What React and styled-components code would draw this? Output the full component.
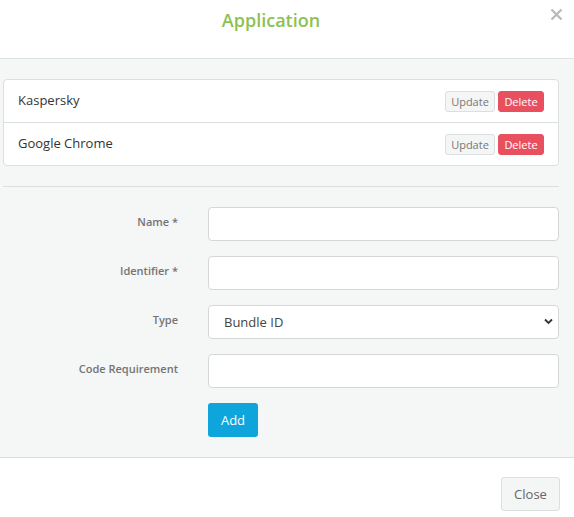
import React from "react";
import styled, { createGlobalStyle } from "styled-components";

const Global = createGlobalStyle`
  html, body { margin: 0; padding: 0; background: #fff; }
  body { font-family: "Open Sans", "Noto Sans", sans-serif; color: #333; }
  * { box-sizing: border-box; }
`;

const Modal = styled.div`
  width: 574px;
  height: 517px;
  display: flex;
  flex-direction: column;
  background: #fff;
  overflow: hidden;
`;

const Header = styled.div`
  position: relative;
  height: 59px;
  border-bottom: 1px solid #dfe3e3;
  display: flex;
  align-items: flex-start;
  justify-content: center;
  padding: 7px 32px 0 0;
`;

const Title = styled.h4`
  margin: 0;
  font-size: 18px;
  font-weight: 600;
  line-height: 26px;
  color: #8cc152;
`;

const CloseX = styled.button`
  position: absolute;
  top: 5px;
  right: 9px;
  width: 18px;
  height: 18px;
  padding: 0;
  border: none;
  background: transparent;
  display: flex;
  align-items: center;
  justify-content: center;
`;

const Body = styled.div`
  flex: 0 0 auto;
  background: #f5f6f6;
  padding: 20px 15px 20px 3px;
  border-bottom: 1px solid #dcdfdf;
`;

const List = styled.div`
  background: #fff;
  border: 1px solid #dcdfdf;
  border-radius: 4px;
`;

const Row = styled.div`
  height: 42px;
  display: flex;
  align-items: center;
  justify-content: space-between;
  padding: 0 14px 0 14px;
  & + & { border-top: 1px solid #dcdfdf; height: 43px; }
`;

const RowName = styled.span`
  font-size: 13px;
  color: #333;
  margin-top: -2px;
`;

const Actions = styled.div`
  display: flex;
  gap: 3px;
`;

const SmallBtn = styled.button`
  height: 21px;
  width: ${(p) => (p.$danger ? "46px" : "50px")};
  padding: 0;
  font-family: inherit;
  font-size: 11px;
  border-radius: 3px;
  border: 1px solid ${(p) => (p.$danger ? "#e8505f" : "#dcdfdf")};
  background: ${(p) => (p.$danger ? "#e8505f" : "#f4f5f5")};
  color: ${(p) => (p.$danger ? "#fff" : "#777")};
`;

const Rule = styled.hr`
  margin: 20px 0;
  border: none;
  border-top: 1px solid #dcdfdf;
`;

const Form = styled.div`
  display: grid;
  grid-template-columns: 175px 1fr;
  column-gap: 30px;
  row-gap: 15px;
  align-items: start;
`;

const Label = styled.label`
  text-align: right;
  font-size: 11px;
  line-height: 15px;
  padding-top: 7px;
  font-weight: 600;
  color: #747474;
`;

const Input = styled.input`
  height: 34px;
  width: 100%;
  border: 1px solid #d5d8d8;
  border-radius: 4px;
  background: #fff;
  font-family: inherit;
  font-size: 13px;
  padding: 0 15px;
`;

const SelectWrap = styled.div`
  position: relative;
  height: 34px;
`;

const Select = styled.select`
  appearance: none;
  height: 34px;
  width: 100%;
  border: 1px solid #d5d8d8;
  border-radius: 4px;
  background: #fff;
  font-family: inherit;
  font-size: 13px;
  color: #444;
  padding: 0 15px;
`;

const Chevron = styled.svg`
  position: absolute;
  right: 6px;
  top: 13px;
  pointer-events: none;
`;

const AddBtn = styled.button`
  grid-column: 2;
  justify-self: start;
  width: 50px;
  height: 34px;
  border: none;
  border-radius: 3px;
  background: #0ea5dc;
  color: #fff;
  font-family: inherit;
  font-size: 13px;
`;

const Footer = styled.div`
  flex: 1;
  display: flex;
  justify-content: flex-end;
  align-items: flex-start;
  padding: 19px 14px 0 0;
`;

const CloseBtn = styled.button`
  height: 34px;
  width: 59px;
  border: 1px solid #dcdfdf;
  border-radius: 3px;
  background: #f4f5f5;
  color: #666;
  font-family: inherit;
  font-size: 13px;
`;

const apps = ["Kaspersky", "Google Chrome"];

export default function App() {
  return (
    <>
      <Global />
      <Modal>
        <Header>
          <Title>Application</Title>
          <CloseX aria-label="close">
            <svg width="13" height="13" viewBox="0 0 13 13">
              <path d="M1.5 1.5 L11.5 11.5 M11.5 1.5 L1.5 11.5" stroke="#b8b8b8" strokeWidth="2.2" />
            </svg>
          </CloseX>
        </Header>
        <Body>
          <List>
            {apps.map((a) => (
              <Row key={a}>
                <RowName>{a}</RowName>
                <Actions>
                  <SmallBtn>Update</SmallBtn>
                  <SmallBtn $danger>Delete</SmallBtn>
                </Actions>
              </Row>
            ))}
          </List>
          <Rule />
          <Form>
            <Label>Name *</Label>
            <Input />
            <Label>Identifier *</Label>
            <Input />
            <Label>Type</Label>
            <SelectWrap>
              <Select defaultValue="bundle">
                <option value="bundle">Bundle ID</option>
                <option value="path">Path</option>
              </Select>
              <Chevron width="9" height="7" viewBox="0 0 9 7">
                <path d="M1 1.5 L4.5 5 L8 1.5" fill="none" stroke="#333" strokeWidth="1.8" />
              </Chevron>
            </SelectWrap>
            <Label>Code Requirement</Label>
            <Input />
            <AddBtn>Add</AddBtn>
          </Form>
        </Body>
        <Footer>
          <CloseBtn>Close</CloseBtn>
        </Footer>
      </Modal>
    </>
  );
}
